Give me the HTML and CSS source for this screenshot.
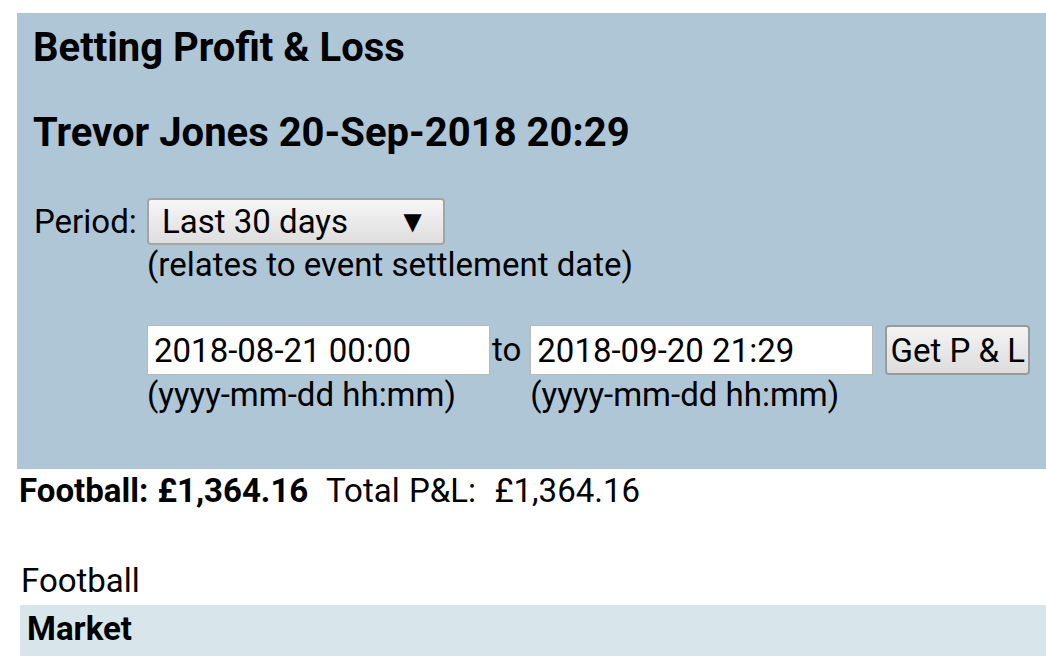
FILE: index.html
```html
<!DOCTYPE html>
<html>
<head>
<meta name="viewport" content="width=device-width, initial-scale=1">
<link rel="stylesheet" href="styles.css">
</head>
<body>

<div class="panel">
  <h2 class="title">Betting Profit &amp; Loss</h2>
  <h2 class="title who">Trevor Jones 20-Sep-2018 20:29</h2>

  <form class="filter">
    <label class="lbl" for="period">Period:</label>
    <div class="field">
      <div class="select" id="period">
        <span>Last 30 days</span>
        <span class="arrow">&#9660;</span>
      </div>
      <div class="note">(relates to event settlement date)</div>
    </div>

    <div class="lbl"></div>
    <div class="field dates">
      <div class="datecol">
        <input type="text" class="date" value="2018-08-21 00:00">
        <div class="note">(yyyy-mm-dd hh:mm)</div>
      </div>
      <span class="to">to</span>
      <div class="datecol">
        <input type="text" class="date" value="2018-09-20 21:29">
        <div class="note">(yyyy-mm-dd hh:mm)</div>
      </div>
      <button type="button" class="btn">Get P &amp; L</button>
    </div>
  </form>
</div>

<div class="summary"><b>Football: &pound;1,364.16</b>&nbsp; Total P&amp;L: &nbsp;&pound;1,364.16</div>

<div class="sport">Football</div>
<div class="market-head">Market</div>

</body>
</html>
```

FILE: styles.css
```css
* {
  box-sizing: border-box;
}

body {
  margin: 0;
  font-family: Roboto, "Noto Sans", sans-serif;
  font-size: 33px;
  line-height: 38px;
  color: #000;
  background: #fff;
  overflow: hidden;
}

.panel {
  margin: 13px 0 0 17px;
  background-color: #afc6d7;
  padding: 13px 16px 55px 16px;
}

.title {
  margin: 0;
  font-size: 40px;
  line-height: 44px;
  font-weight: bold;
}

.who {
  margin-top: 41px;
}

.filter {
  margin-top: 43px;
  display: grid;
  grid-template-columns: 114px 1fr;
}

.lbl {
  padding-left: 1px;
  line-height: 47px;
}

.select {
  width: 298px;
  height: 47px;
  display: flex;
  align-items: center;
  justify-content: space-between;
  padding: 0 14px 0 13px;
  border: 2px solid #a4a4a4;
  border-radius: 4px;
  background: linear-gradient(#f6f6f6, #dedede);
}

.arrow {
  font-size: 31px;
  margin-right: 1px;
}

.note {
  margin-top: 1px;
}

.dates {
  display: flex;
  align-items: flex-start;
  margin-top: 41px;
}

.date {
  width: 343px;
  height: 50px;
  font-family: inherit;
  font-size: 33px;
  padding: 0 6px;
  border: 1px solid #b8b8b8;
  background: #fff;
  color: #000;
}

.to {
  line-height: 50px;
  margin: 0 9px 0 2px;
}

.btn {
  margin-left: 12px;
  width: 145px;
  height: 50px;
  padding: 0;
  font-family: inherit;
  font-size: 33px;
  border: 2px solid #9a9a9a;
  border-radius: 4px;
  background: linear-gradient(#f4f4f4, #dcdcdc);
  color: #000;
}

.summary {
  margin: 3px 0 0 19px;
  white-space: nowrap;
  word-spacing: 1px;
}

.sport {
  margin: 52px 0 0 21px;
}

.market-head {
  margin: 5px 0 0 20px;
  padding: 5px 8px 8px 7px;
  background-color: #d8e6eb;
  font-weight: bold;
}
```
